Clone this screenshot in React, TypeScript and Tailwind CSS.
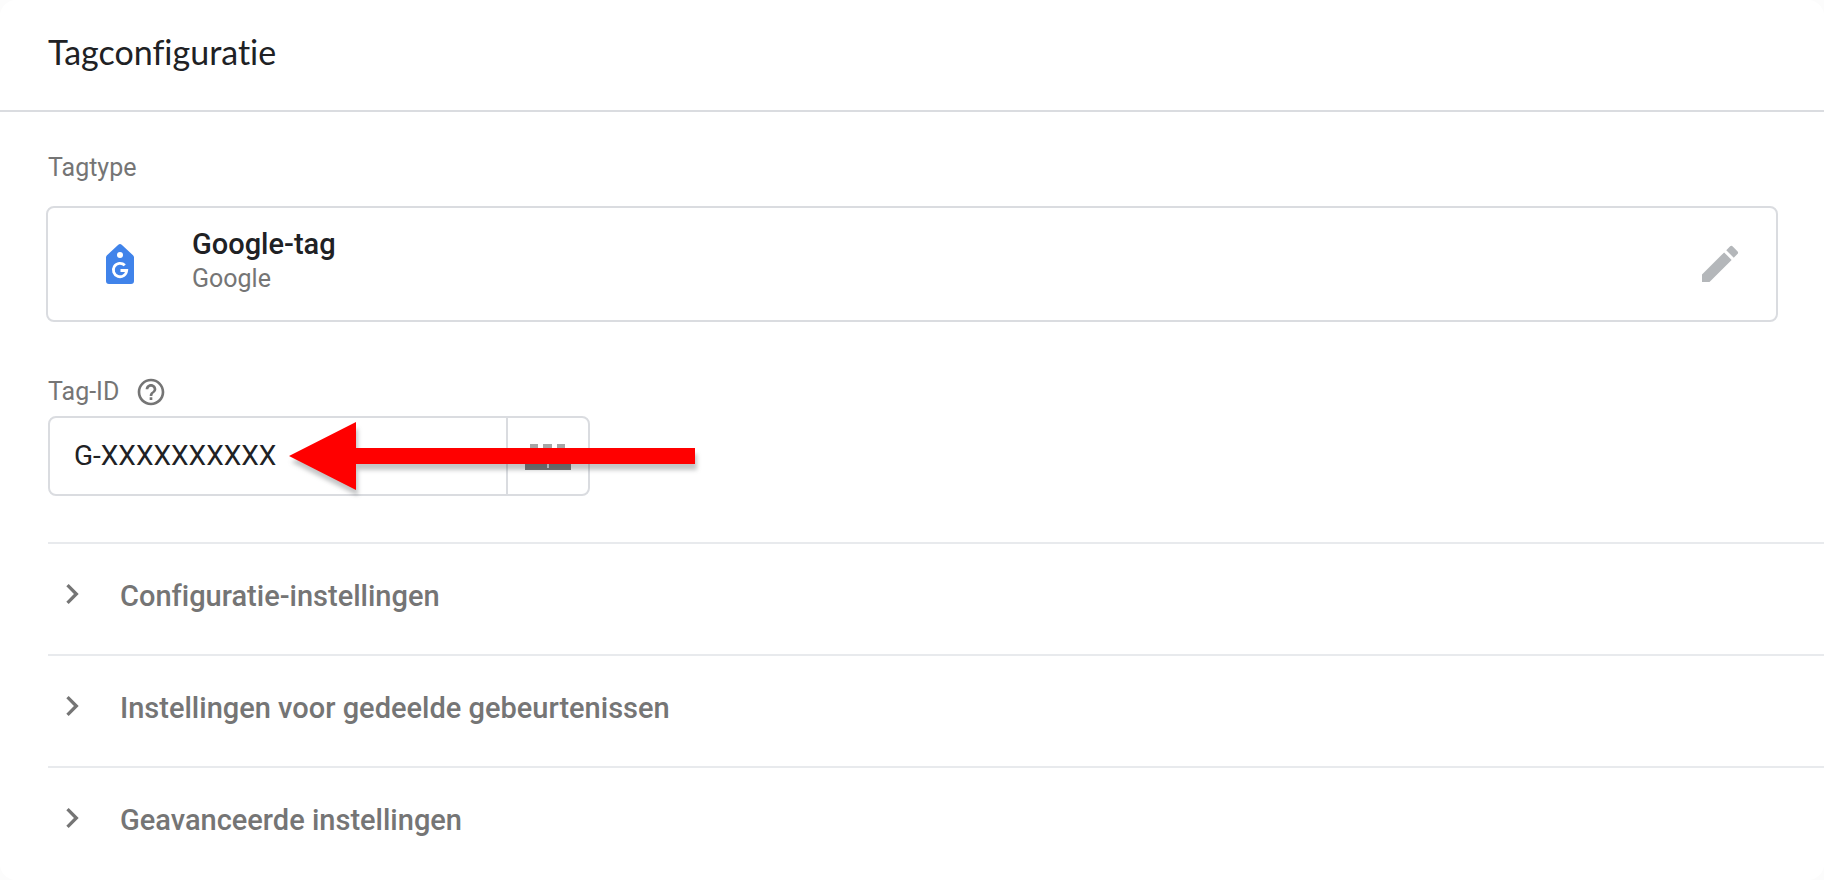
import { MdChevronRight, MdEdit, MdHelpOutline } from "react-icons/md"

const sections = [
  "Configuratie-instellingen",
  "Instellingen voor gedeelde gebeurtenissen",
  "Geavanceerde instellingen",
]

function GoogleTagIcon() {
  return (
    <svg width="28" height="40" viewBox="0 0 28 40" className="shrink-0" aria-hidden="true">
      <path
        d="M12.3 0.8a2.6 2.6 0 0 1 3.4 0L27 11.2a3 3 0 0 1 1 2.2V37a3 3 0 0 1-3 3H3a3 3 0 0 1-3-3V13.4a3 3 0 0 1 1-2.2z"
        fill="#4083ea"
      />
      <circle cx="14" cy="11" r="3" fill="#fff" />
      <path
        d="M18.8 21.3A6.7 6.7 0 1 0 20.7 26.5H14.5"
        fill="none"
        stroke="#fff"
        strokeWidth="2.8"
      />
    </svg>
  )
}

function BrickIcon() {
  return (
    <svg width="46" height="28" viewBox="0 0 46 28" aria-hidden="true">
      <path d="M5 2h8v6H5zM18 2h9v6h-9zM32 2h8v6h-8z" fill="#a6a6a6" />
      <path d="M0 8h46v20H0z" fill="#757575" />
      <path d="M22 18h2v8h-2z" fill="#dadce0" />
    </svg>
  )
}

function Arrow() {
  return (
    <svg
      width="406"
      height="68"
      viewBox="0 0 406 68"
      className="pointer-events-none absolute top-1 left-[239px] overflow-visible drop-shadow-[2px_6px_2px_rgba(60,64,67,0.3)]"
      aria-hidden="true"
    >
      <path d="M0 34 67 0v26h339v16H67v26z" fill="#f00" />
    </svg>
  )
}

export default function App() {
  return (
    <div className="bg-[#fcfcfc] font-[Roboto,sans-serif] [font-variant-ligatures:none]">
      <main className="min-h-screen rounded-2xl bg-white">
        <header className="border-b-2 border-[#dadce0] px-12 pt-8 pb-[38px]">
          <h1 className="font-[Lato,sans-serif] text-[34px] leading-10 text-[#202124]">Tagconfiguratie</h1>
        </header>

        <div className="px-12 pt-10">
          <h2 className="text-[25px] leading-8 text-[#757575]">Tagtype</h2>
          <div className="-mx-0.5 mt-[22px] flex h-[116px] items-center rounded-lg border-2 border-[#dadce0] pr-8 pl-[58px]">
            <GoogleTagIcon />
            <div className="ml-[58px] flex-1 pb-2">
              <div className="text-[29px] leading-[38px] font-medium text-[#202124]">Google-tag</div>
              <div className="text-[25px] leading-8 text-[#757575]">Google</div>
            </div>
            <button type="button" aria-label="Bewerken">
              <MdEdit size={48} color="#b4b7ba" />
            </button>
          </div>

          <div className="mt-[54px] flex items-center gap-4">
            <label htmlFor="tag-id" className="text-[25px] leading-8 text-[#757575]">
              Tag-ID
            </label>
            <button type="button" aria-label="Help">
              <MdHelpOutline size={32} color="#757575" />
            </button>
          </div>
          <div className="relative mt-2 flex h-20 w-[542px] rounded-lg border-2 border-[#dadce0]">
            <input
              id="tag-id"
              type="text"
              defaultValue="G-XXXXXXXXXX"
              className="min-w-0 flex-1 bg-transparent pl-6 text-[28px] text-[#202124] outline-none"
            />
            <button
              type="button"
              aria-label="Variabele kiezen"
              className="flex w-[82px] items-center justify-center border-l-2 border-[#dadce0]"
            >
              <BrickIcon />
            </button>
            <Arrow />
          </div>
        </div>

        <div className="mt-[46px] ml-12">
          {sections.map((title) => (
            <button
              key={title}
              type="button"
              className="flex h-28 w-full items-start gap-7 border-t-2 border-[#e8eaed] pt-[30px] pl-1 text-left"
            >
              <MdChevronRight size={40} color="#757575" />
              <span className="text-[29px] leading-[44px] font-medium text-[#757575]">{title}</span>
            </button>
          ))}
        </div>
      </main>
    </div>
  )
}
